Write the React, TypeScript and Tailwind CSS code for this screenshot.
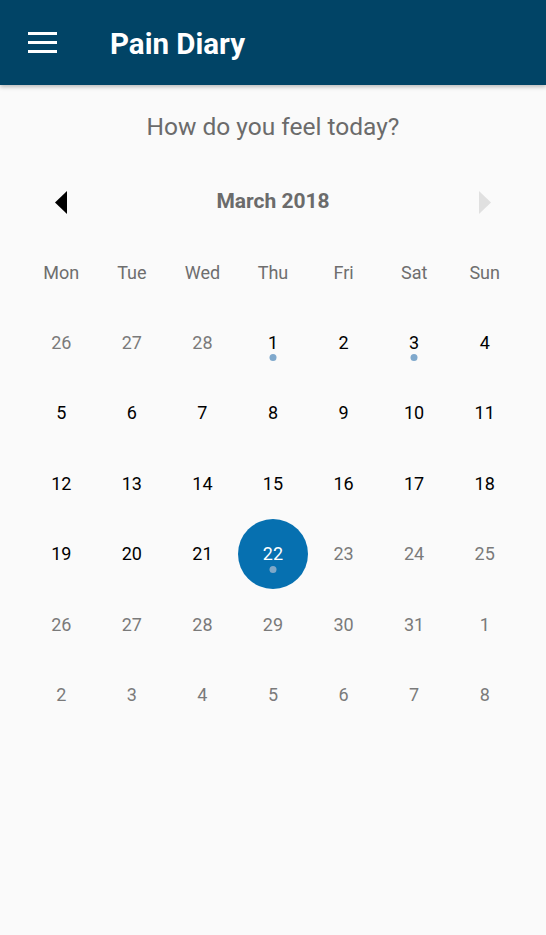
import React from 'react';

type Day = { n: number; muted?: boolean; dot?: boolean; selected?: boolean };

const weekdays = ['Mon', 'Tue', 'Wed', 'Thu', 'Fri', 'Sat', 'Sun'];

const buildDays = (): Day[] => {
  const days: Day[] = [26, 27, 28].map(n => ({ n, muted: true }));
  for (let n = 1; n <= 31; n++) {
    days.push({
      n,
      muted: n > 22,
      dot: n === 1 || n === 3 || n === 22,
      selected: n === 22,
    });
  }
  for (let n = 1; n <= 8; n++) days.push({ n, muted: true });
  return days;
};

const App: React.FC = () => {
  const days = buildDays();

  return (
    <div className="min-h-[935px] bg-[#fafafa] font-['Roboto',sans-serif]">
      <header className="h-[85px] bg-[#014466] flex items-center shadow-[0_2px_4px_rgba(0,0,0,0.25)]">
        <div className="ml-[28px] w-[29px] flex flex-col gap-[6px]">
          <span className="h-[3px] bg-white block" />
          <span className="h-[3px] bg-white block" />
          <span className="h-[3px] bg-white block" />
        </div>
        <h1 className="ml-[53px] mt-[4px] text-white text-[29.5px] font-bold">Pain Diary</h1>
      </header>

      <p className="mt-[26px] text-center text-[24.5px] text-[#6b6b6b] leading-[32px]">How do you feel today?</p>

      <div className="mt-[39px] px-[26px] flex items-center justify-between h-[40px]">
        <div className="w-[70px] flex justify-center">
          <svg width="12" height="23" viewBox="0 0 12 23">
            <polygon points="12,0 0,11.5 12,23" fill="#000" />
          </svg>
        </div>
        <span className="text-[21px] font-bold text-[#6b6b6b]">March 2018</span>
        <div className="w-[70px] flex justify-center">
          <svg width="12" height="23" viewBox="0 0 12 23">
            <polygon points="0,0 12,11.5 0,23" fill="#e0e0e0" />
          </svg>
        </div>
      </div>

      <div className="mt-[15px] px-[26px] grid grid-cols-7">
        {weekdays.map(w => (
          <div key={w} className="h-[70px] flex items-center justify-center text-[18px] text-[#6e6e6e]">
            {w}
          </div>
        ))}
        {days.map((d, i) => (
          <div key={i} className="h-[70.5px] flex items-center justify-center">
            <div
              className={
                'relative w-[70px] h-[70px] rounded-full flex items-center justify-center text-[18px] ' +
                (d.selected ? 'bg-[#0670b0] text-white' : d.muted ? 'text-[#7a7a7a]' : 'text-black')
              }
            >
              {d.n}
              {d.dot && (
                <span
                  className={
                    'absolute left-1/2 -translate-x-1/2 top-[47px] w-[7px] h-[7px] rounded-full ' +
                    (d.selected ? 'bg-[#7fa8c8]' : 'bg-[#7fa8cc]')
                  }
                />
              )}
            </div>
          </div>
        ))}
      </div>
    </div>
  );
};

export default App;
